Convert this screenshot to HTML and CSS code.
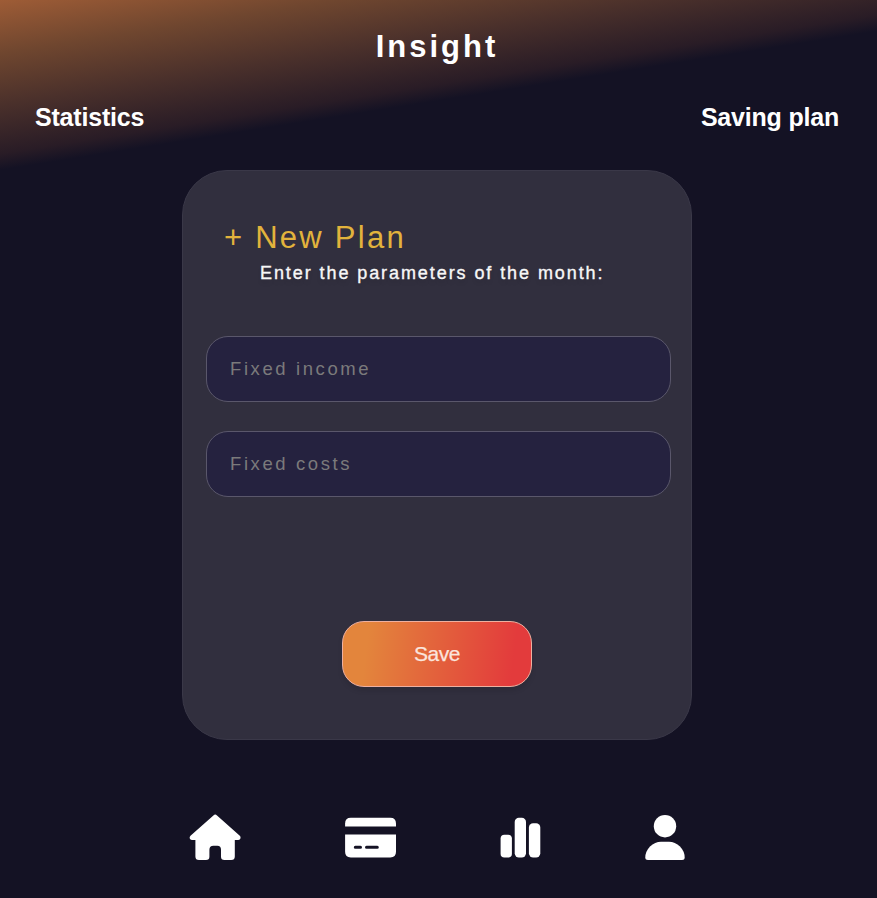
FILE: index.html
```html
<!DOCTYPE html>
<html lang="en">
<head>
<meta charset="utf-8">
<title>Insight</title>
<link rel="stylesheet" href="styles.css">
</head>
<body>
<header class="header">
  <h1 class="title">Insight</h1>
  <nav class="tabs"><a class="tab">Statistics</a><a class="tab">Saving plan</a></nav>
</header>
<main class="card">
  <h2 class="plan-title">+ New Plan</h2>
  <p class="hint">Enter the parameters of the month:</p>
  <form class="form">
    <input class="field" type="text" placeholder="Fixed income">
    <input class="field" type="text" placeholder="Fixed costs">
    <button class="save" type="button">Save</button>
  </form>
</main>
<nav class="dock">
  <svg class="icon" width="52" height="46" viewBox="0 -.5 52 46"><path d="M24.400 .9q1.800-1.700 3.600 0L50.800 21.200Q52 22.500 51.300 24.200 50.600 25.600 49 25.600H45.800V42Q45.800 45.500 42.200 45.500H35.500Q32 45.500 32 42.200V35.200Q32 31.300 28.400 31.300H24.400Q20.400 31.300 20.400 35.200V42.200Q20.400 45.500 17 45.500H10Q6.400 45.500 6.400 42V25.600H3.200Q1.600 25.600 .9 24.200 .2 22.500 1.500 21.200Z"/></svg>
  <svg class="icon" width="52" height="46" viewBox="-.3 -.5 52 46"><path d="M.8 12V9Q.8 3.300 6.500 3.300H46Q51.700 3.300 51.700 9V12Z"/><path fill-rule="evenodd" d="M.8 20H51.700V37.300Q51.700 43 46 43H6.500Q.8 43 .8 37.300ZM11 31.300a1.500 1.500 0 0 0 0 3H16.200a1.500 1.500 0 0 0 0-3ZM22.200 31.300a1.500 1.500 0 0 0 0 3H33a1.500 1.500 0 0 0 0-3Z"/></svg>
  <svg class="icon" width="42" height="46" viewBox="-.7 -.5 42 46"><rect x=".9" y="20.200" width="11.300" height="22.800" rx="3.800"/><rect x="15" y="3.200" width="11.300" height="39.800" rx="4.200"/><rect x="29.200" y="8.800" width="11.400" height="34.200" rx="4.200"/></svg>
  <svg class="icon" width="42" height="46" viewBox="0 -.5 42 46"><circle cx="21" cy="11.700" r="11.200"/><path d="M1.300 43Q1.300 37 6 32 11 27.200 17 27.200H25Q31 27.200 36 32 40.700 37 40.700 43 40.700 45.500 38 45.500H4Q1.300 45.500 1.300 43Z"/></svg>
</nav>
</body>
</html>
```
FILE: styles.css
```css
* { box-sizing: border-box; }
html { height: 100%; }
body {
  margin: 0;
  height: 898px;
  padding-right: 3px;
  overflow: hidden;
  display: flex;
  flex-direction: column;
  align-items: center;
  color: #fff;
  font-family: "Liberation Sans", Arial, sans-serif;
  background: linear-gradient(171deg, #9e5c36 0, #6f462f 53px, #4a302b 104px, #291c26 152px, #141224 168px);
}
.header { width: 100%; height: 170px; padding: 29px 35px 0; }
.title {
  margin: 0;
  font-size: 31px;
  line-height: 35px;
  letter-spacing: 3px;
  text-align: center;
}
.tabs { display: flex; justify-content: space-between; margin-top: 39px; }
.tab { font-size: 25px; line-height: 28px; font-weight: 700; letter-spacing: -.2px; }
.card {
  width: 510px;
  height: 570px;
  padding: 49px 20px 0 23px;
  border: 1px solid #3a3848;
  border-radius: 45px;
  background: #312f3e;
}
.plan-title {
  margin: 0 0 0 18px;
  font-size: 31px;
  font-weight: 400;
  line-height: 36px;
  letter-spacing: 2.250px;
  color: #e2b33c;
}
.hint {
  margin: 6px 0 0 54px;
  font-size: 18px;
  line-height: 22px;
  letter-spacing: 1.920px;
  white-space: nowrap;
  color: #f7f7f7;
  -webkit-text-stroke: .35px #f7f7f7;
  text-shadow: 0 4px 4px rgba(0, 0, 0, .1);
}
.form { display: flex; flex-direction: column; margin-top: 52px; }
.field {
  width: 465px;
  height: 66px;
  margin-bottom: 29px;
  padding: 0 23px;
  border: 1px solid #5a576b;
  border-radius: 22px;
  background: #25223f;
  font: 18.500px "Liberation Sans", Arial, sans-serif;
  letter-spacing: 2.600px;
}
.field::placeholder { color: #7b7a7b; opacity: 1; }
.save {
  width: 190px;
  height: 66px;
  margin: 95px 0 0 136px;
  padding: 0;
  border: 1px solid #eeb0a0;
  border-radius: 22px;
  background: linear-gradient(97deg, #e3853c 14%, #e33b3c 89%) border-box;
  box-shadow: 0 4px 5px rgba(0, 0, 0, .1);
  color: #fbe5dd;
  font: 21px "Liberation Sans", Arial, sans-serif;
  letter-spacing: -.5px;
  -webkit-text-stroke: .25px #fbe5dd;
}
.dock {
  display: flex;
  justify-content: space-between;
  width: 497px;
  margin-top: 74px;
}
.icon { fill: #fff; }
```
